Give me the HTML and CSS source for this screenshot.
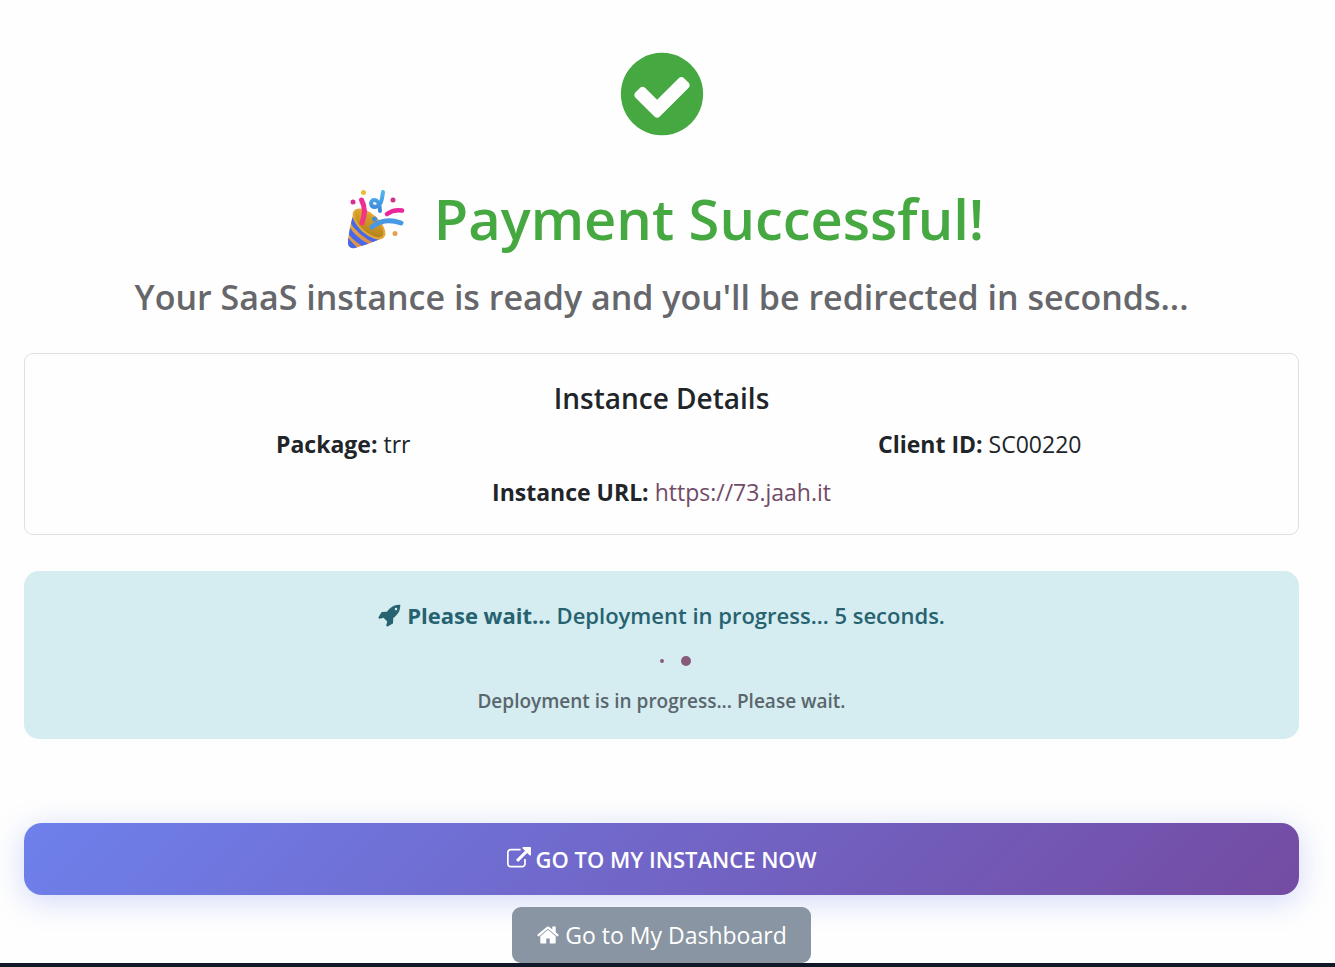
FILE: index.html
```html
<!DOCTYPE html>
<html lang="en">
<head>
<meta charset="utf-8">
<meta name="viewport" content="width=device-width, initial-scale=1">
<title>Payment Successful</title>
<link rel="stylesheet" href="styles.css">
</head>
<body>
<main class="page">
  <svg class="status-icon" viewBox="0 0 1792 1792" aria-hidden="true"><path d="M1412 734q0-28-18-46l-91-90q-19-19-45-19t-45 19l-408 407-226-226q-19-19-45-19t-45 19l-91 90q-18 18-18 46 0 27 18 45l362 362q19 19 45 19 27 0 46-19l543-543q18-18 18-45zm252 162q0 209-103 385.5t-279.5 279.5-385.5 103-385.5-103-279.5-279.5-103-385.5 103-385.5 279.5-279.5 385.5-103 385.5 103 279.5 279.5 103 385.5z"/></svg>
  <h1 class="title">
    <svg class="popper" viewBox="0 0 75 75" aria-hidden="true">
      <defs>
        <linearGradient id="cone" x1="0" y1="0" x2="1" y2="1"><stop offset="0" stop-color="#eab036"/><stop offset="1" stop-color="#dc7d56"/></linearGradient>
        <linearGradient id="inside" x1="0" y1="0" x2="1" y2="1"><stop offset="0" stop-color="#e8ad2b"/><stop offset="1" stop-color="#a97a1c"/></linearGradient>
        <linearGradient id="pink" x1="0" y1="0" x2="0" y2="1"><stop offset="0" stop-color="#ee2a9b"/><stop offset="1" stop-color="#f5377a"/></linearGradient>
        <linearGradient id="blue" x1="0" y1="0" x2="0" y2="1"><stop offset="0" stop-color="#4fb4ee"/><stop offset="1" stop-color="#3d86d8"/></linearGradient>
        <clipPath id="coneclip"><path d="M15 31C12 41 9 55 9 62Q9 68 16 67Q30 63 44 57C34 56 20 45 15 31Z"/></clipPath>
      </defs>
      <path d="M15 31C12 41 9 55 9 62Q9 68 16 67Q30 63 44 57C34 56 20 45 15 31Z" fill="url(#cone)"/>
      <g clip-path="url(#coneclip)" fill="none" stroke="#4569e8" stroke-width="5">
        <path d="M11 37Q20 53 39 61"/>
        <path d="M9 48Q15 58 28 65"/>
        <path d="M7 58Q11 63 18 70"/>
      </g>
      <ellipse cx="30" cy="43" rx="19" ry="9" transform="rotate(42 30 43)" fill="url(#inside)" stroke="#e3a83a" stroke-width="2"/>
      <path d="M22.500 19Q28 29 23 42" fill="none" stroke="url(#pink)" stroke-width="5" stroke-linecap="round"/>
      <path d="M44 11C43 19 42 25 36 26C31 26 31 19 35 19C39 19 41 24 41 30" fill="none" stroke="url(#blue)" stroke-width="4" stroke-linecap="round"/>
      <path d="M48 33Q55 28 63 29.500" fill="none" stroke="#eb259b" stroke-width="4.500" stroke-linecap="round"/>
      <path d="M33 46Q45 36 62 42" fill="none" stroke="#4898e4" stroke-width="5" stroke-linecap="round"/>
      <circle cx="24.500" cy="11.500" r="2.500" fill="#e7bd3b"/><circle cx="14" cy="21" r="2.500" fill="#da2c91"/><circle cx="54" cy="19" r="2.500" fill="#cf3287"/><circle cx="56" cy="52.500" r="2.500" fill="#e5a04e"/><circle cx="35.500" cy="38" r="2.500" fill="#3d8fdd"/>
    </svg>
    <span>Payment Successful!</span>
  </h1>
  <p class="subtitle">Your SaaS instance is ready and you'll be redirected in seconds...</p>

  <section class="card">
    <h2 class="card-title">Instance Details</h2>
    <div class="facts">
      <p><strong>Package:</strong> trr</p>
      <p><strong>Client ID:</strong> SC00220</p>
    </div>
    <p class="url"><strong>Instance URL:</strong> <a class="link" href="https://73.jaah.it">https://73.jaah.it</a></p>
  </section>

  <section class="notice" role="status">
    <p class="notice-main"><svg class="icon" viewBox="0 0 1792 1792" aria-hidden="true"><path d="M1440 448q0-40-28-68t-68-28-68 28-28 68 28 68 68 28 68-28 28-68zm224-288q0 249-75.500 430.500t-253.500 360.500q-81 80-195 176l-20 379q-2 16-16 26l-384 224q-7 4-16 4-12 0-23-9l-64-64q-13-14-8-32l85-276-281-281-276 85q-3 1-9 1-14 0-23-9l-64-64q-17-19-5-39l224-384q10-14 26-16l379-20q96-114 176-195 188-187 358-258t431-71q14 0 24 9.500t10 22.500z"/></svg> <span><strong>Please wait...</strong> Deployment in progress... 5 seconds.</span></p>
    <div class="dots" aria-hidden="true"><span class="dot"></span><span class="dot dot-small"></span><span class="dot dot-large"></span></div>
    <p class="notice-sub">Deployment is in progress... Please wait.</p>
  </section>

  <a class="button button-primary" href="https://73.jaah.it"><svg class="icon" viewBox="0 0 1792 1792" aria-hidden="true"><path d="M1408 928v320q0 119-84.500 203.500t-203.500 84.500h-832q-119 0-203.500-84.500t-84.500-203.500v-832q0-119 84.500-203.500t203.500-84.500h704q14 0 23 9t9 23v64q0 14-9 23t-23 9h-704q-66 0-113 47t-47 113v832q0 66 47 113t113 47h832q66 0 113-47t47-113v-320q0-14 9-23t23-9h64q14 0 23 9t9 23zm384-864v512q0 26-19 45t-45 19-45-19l-176-176-652 652q-10 10-23 10t-23-10l-114-114q-10-10-10-23t10-23l652-652-176-176q-19-19-19-45t19-45 45-19h512q26 0 45 19t19 45z"/></svg><span>GO TO MY INSTANCE NOW</span></a>
  <a class="button button-secondary" href="#dashboard"><svg class="icon" viewBox="0 0 1792 1792" aria-hidden="true"><path d="M1472 992v480q0 26-19 45t-45 19h-384v-384h-256v384h-384q-26 0-45-19t-19-45v-480q0-1 .5-3t.5-3l575-474 575 474q1 2 1 6zm223-69l-62 74q-8 9-21 11h-3q-13 0-21-7l-692-577-692 577q-12 8-24 7-13-2-21-11l-62-74q-8-10-7-23.500t11-21.500l719-599q32-26 76-26t76 26l244 204v-195q0-14 9-23t23-9h192q14 0 23 9t9 23v408l219 182q10 8 11 21.500t-7 23.500z"/></svg><span>Go to My Dashboard</span></a>
</main>
<footer class="footer"></footer>
</body>
</html>
```
FILE: styles.css
```css
* { box-sizing: border-box; }
html { height: 100%; }
body {
  margin: 0;
  min-height: 100%;
  display: flex;
  flex-direction: column;
  background: #fefefe;
  color: #212529;
  font: 400 23px/36px "Open Sans", "Noto Sans", sans-serif;
}
h1, h2, p { margin: 0; }
strong { font-weight: 700; }
.page {
  display: flex;
  flex-direction: column;
  align-items: center;
  padding: 46px 36px 0 24px;
  text-align: center;
}
.status-icon { width: 96px; height: 96px; fill: #45a841; }
.title {
  display: flex;
  align-items: center;
  gap: 20px;
  margin-top: 40px;
  color: #45a841;
  font-size: 56px;
  line-height: 72px;
  font-weight: 600;
}
.popper { width: 75px; height: 75px; margin: -2px 0; }
.subtitle {
  margin-top: 19px;
  color: #66676b;
  font-size: 34px;
  line-height: 48px;
  font-weight: 600;
}
.card {
  width: 100%;
  margin-top: 32px;
  padding: 24px 0;
  border: 1px solid #dee0e2;
  border-radius: 9px;
}
.card-title { font-size: 28px; line-height: 40px; font-weight: 600; }
.facts { display: grid; grid-template-columns: 1fr 1fr; margin: 8px 0 12px; }
.link { color: #714b67; text-decoration: none; }
.notice {
  width: 100%;
  margin-top: 36px;
  padding: 24px;
  border-radius: 15px;
  background: #d5ecf0;
  color: #266270;
}
.notice-main {
  display: flex;
  align-items: center;
  justify-content: center;
  gap: 5px;
  font-size: 22px;
  line-height: 40px;
  font-weight: 600;
}
.icon { flex: none; width: 24px; height: 24px; fill: currentColor; }
.dots { display: flex; justify-content: center; align-items: center; gap: 12px; height: 12px; margin: 20px 0; }
.dot { width: 12px; height: 12px; border-radius: 50%; background: #875a7b; transform: scale(0); }
.dot-small { transform: scale(0.33); }
.dot-large { transform: scale(0.83); }
.notice-sub { color: #5a666d; font-size: 19px; line-height: 28px; font-weight: 600; }
.button {
  display: flex;
  align-items: center;
  justify-content: center;
  gap: 5px;
  color: #fff;
  text-decoration: none;
}
.button-primary {
  width: 100%;
  margin-top: 84px;
  padding: 18px 24px;
  border-radius: 18px;
  background: linear-gradient(135deg, #6e80ec 0%, #744ba2 100%);
  box-shadow: 0 6px 30px rgba(102, 126, 234, 0.3);
  font-size: 22px;
  font-weight: 600;
}
.button-secondary {
  position: relative;
  margin-top: 12px;
  padding: 10px 24px;
  border-radius: 9px;
  background: #8995a2;
}
.footer { flex: 1 0 4px; background: #111827; }
```
